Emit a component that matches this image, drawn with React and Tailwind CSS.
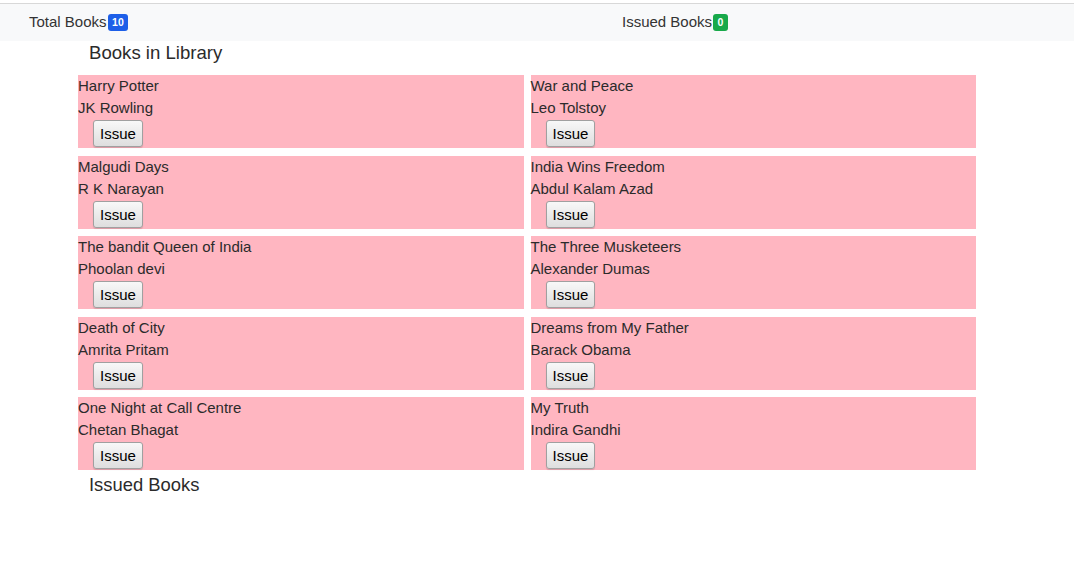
import React from "react";

const books = [
  { title: "Harry Potter", author: "JK Rowling" },
  { title: "War and Peace", author: "Leo Tolstoy" },
  { title: "Malgudi Days", author: "R K Narayan" },
  { title: "India Wins Freedom", author: "Abdul Kalam Azad" },
  { title: "The bandit Queen of India", author: "Phoolan devi" },
  { title: "The Three Musketeers", author: "Alexander Dumas" },
  { title: "Death of City", author: "Amrita Pritam" },
  { title: "Dreams from My Father", author: "Barack Obama" },
  { title: "One Night at Call Centre", author: "Chetan Bhagat" },
  { title: "My Truth", author: "Indira Gandhi" },
];

function BookCard({ book }) {
  return (
    <div className="bg-[#ffb6c1] h-[73px] flex flex-col items-start">
      <div className="leading-[21px]">{book.title}</div>
      <div className="leading-[24px]">{book.author}</div>
      <button className="ml-[15px] h-[27px] px-[6px] text-[15px] leading-none text-black rounded-[3px] border border-[#a0a0a0] bg-gradient-to-b from-[#f8f8f8] to-[#dedede] shadow-[0_1px_1px_rgba(0,0,0,0.15)]">
        Issue
      </button>
    </div>
  );
}

export default function App() {
  return (
    <div className="min-h-screen w-full bg-white text-[#2b2b2b] text-[15px] font-['Liberation_Sans',Arial,sans-serif]">
      {/* Navbar */}
      <div className="pt-[3px]">
        <div className="border-t border-[#d8d8d8] bg-[#f8f9fa] h-[38px] flex items-center pl-[29px]">
          <div className="w-[593px] flex items-center">
            <span className="text-[15px] text-[#333]">Total Books</span>
            <span className="ml-[1px] h-[17px] px-[4.5px] rounded-[3px] bg-[#1d5fe8] text-white text-[10.5px] font-bold flex items-center leading-none">
              10
            </span>
          </div>
          <div className="flex items-center">
            <span className="text-[15px] text-[#333]">Issued Books</span>
            <span className="ml-[1px] h-[17px] px-[4.5px] rounded-[3px] bg-[#18a94a] text-white text-[10.5px] font-bold flex items-center leading-none">
              0
            </span>
          </div>
        </div>
      </div>

      <div className="pl-[78px] w-[976px]">
        <h5 className="pl-[11px] text-[18.6px] leading-[22px] pt-[1px] h-[34px] text-[#2b2b2b]">
          Books in Library
        </h5>
        <div className="grid grid-cols-2 gap-x-[7px] gap-y-[7.5px]">
          {books.map((b) => (
            <BookCard key={b.title} book={b} />
          ))}
        </div>
        <h5 className="pl-[11px] text-[18.4px] leading-[22px] mt-[4px] text-[#2b2b2b]">
          Issued Books
        </h5>
      </div>
    </div>
  );
}
